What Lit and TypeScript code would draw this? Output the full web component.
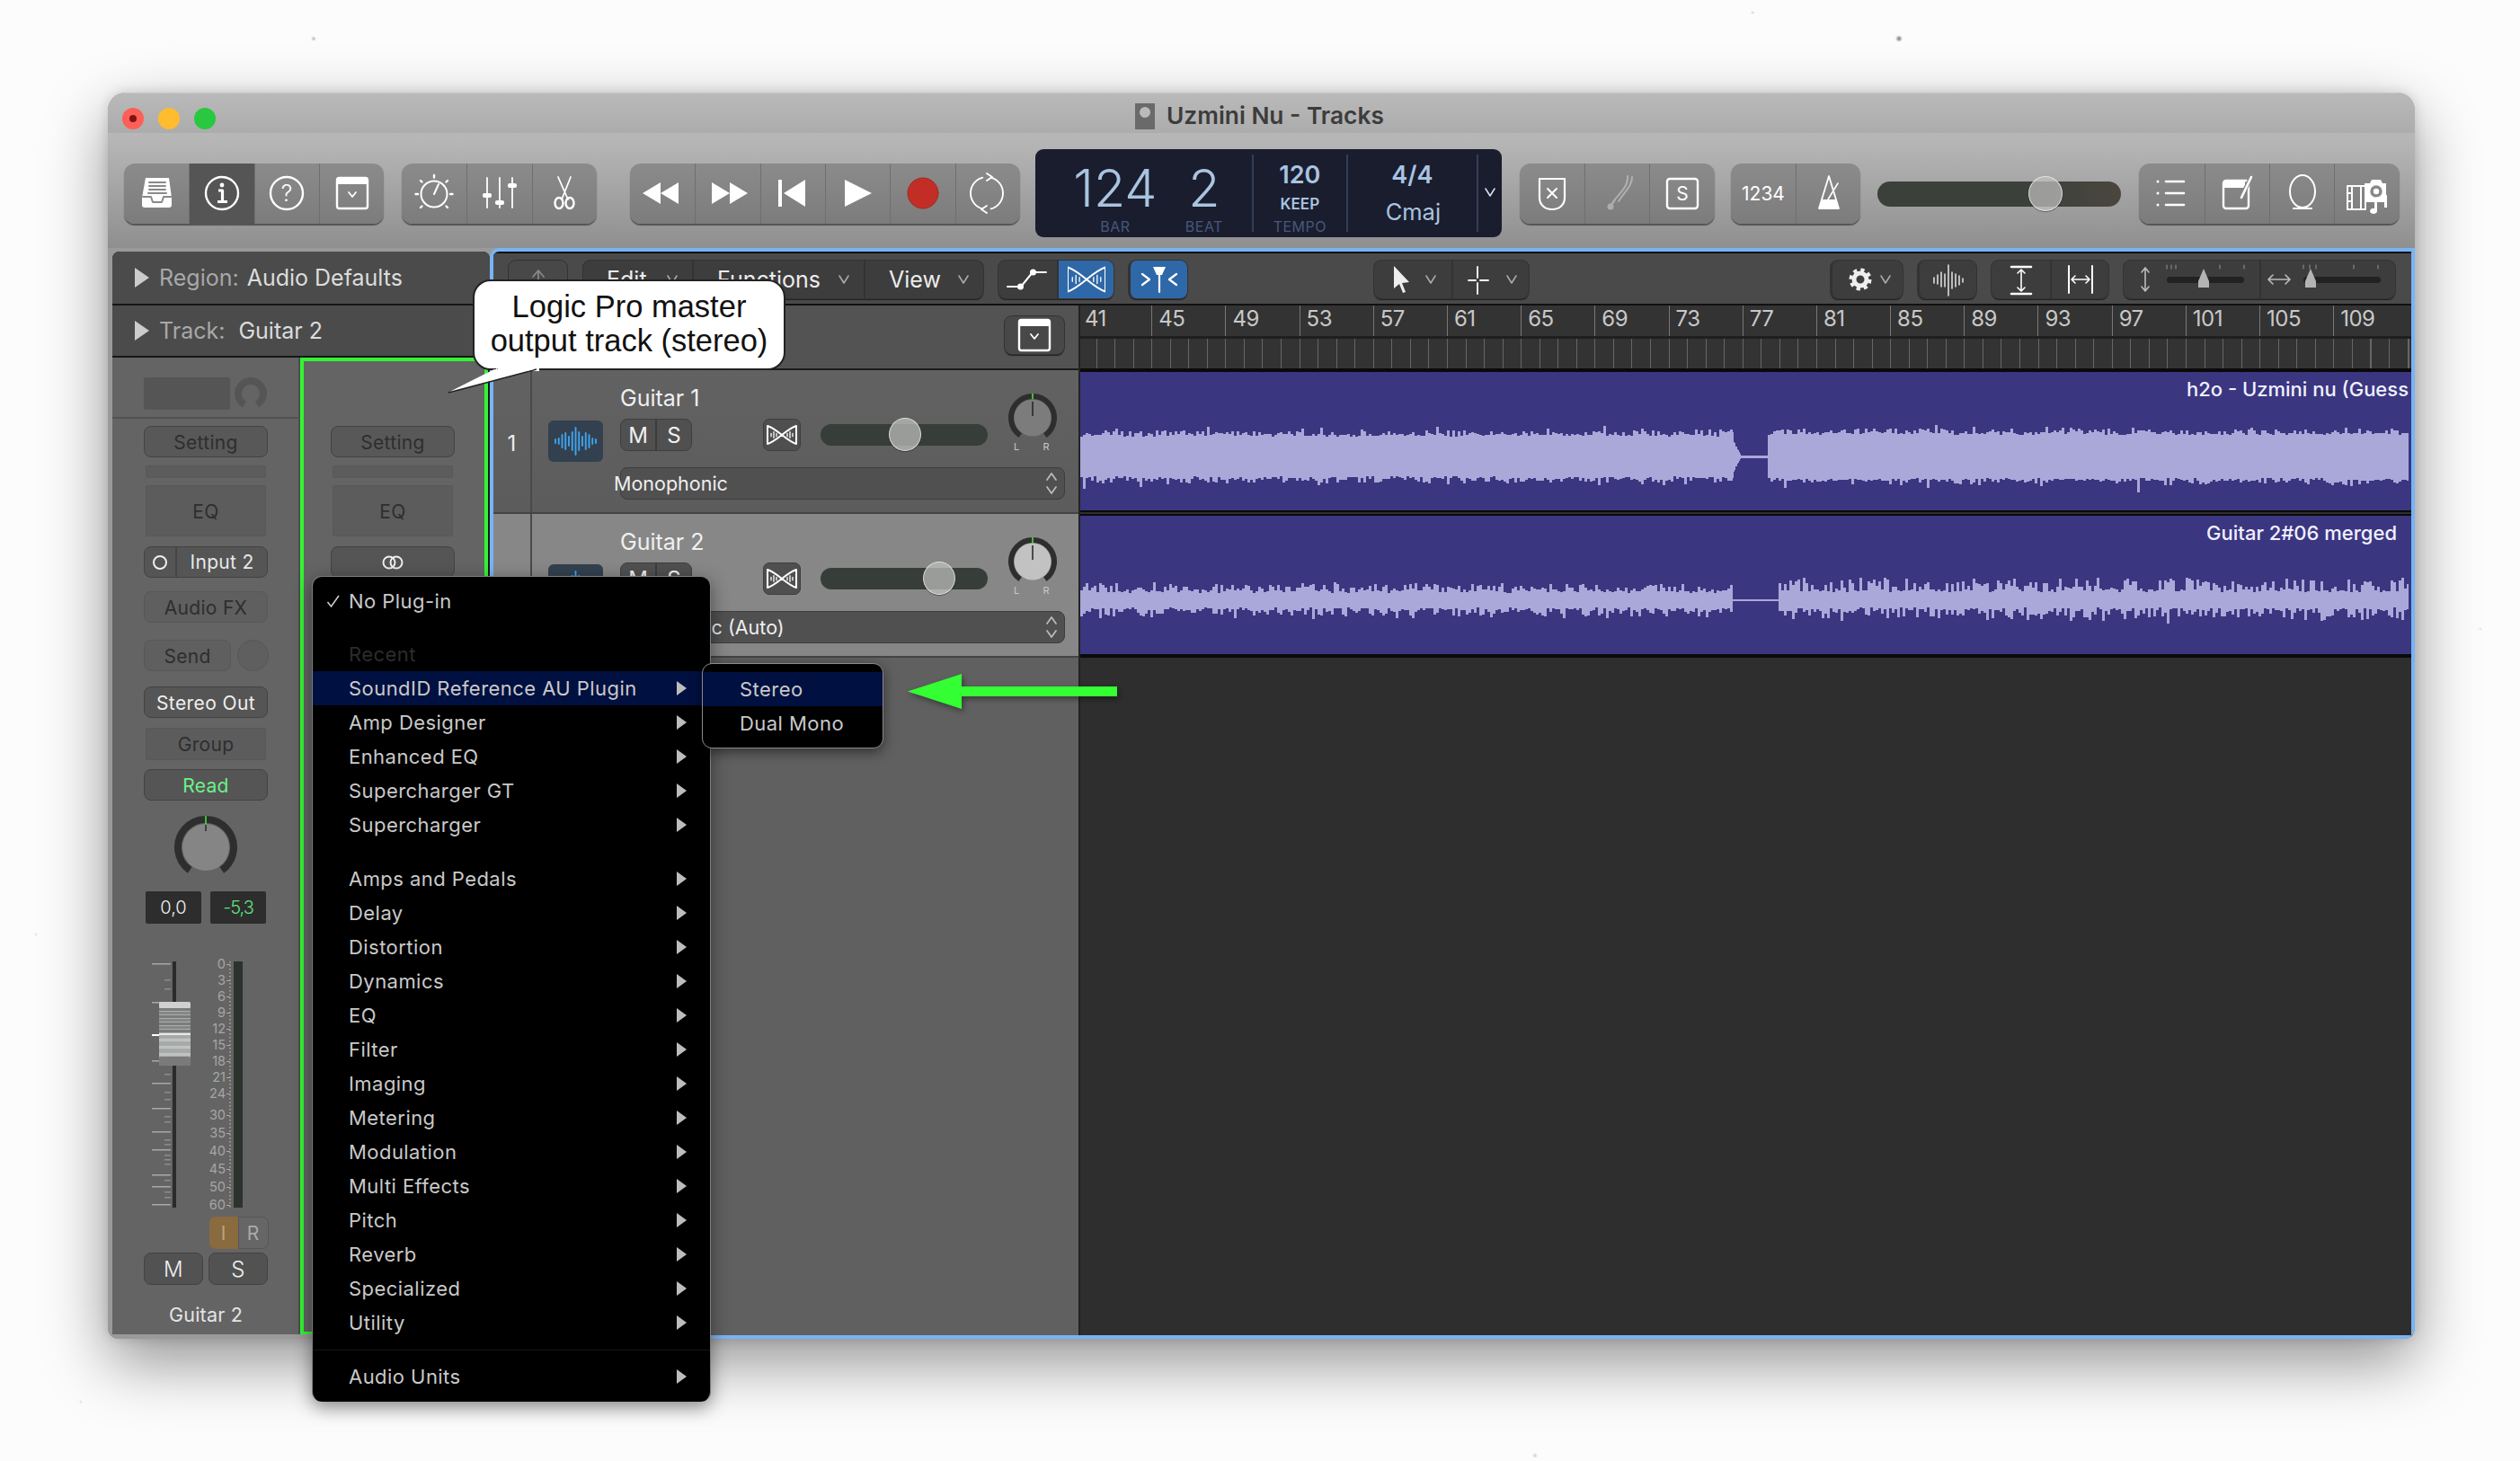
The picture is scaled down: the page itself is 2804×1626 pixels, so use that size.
import { LitElement, html, css, svg } from "lit";
import { customElement } from "lit/decorators.js";

const ic = (c: unknown, w = 72, h = 67) =>
  html`<svg class="ic" width=${w} height=${h} viewBox="0 0 ${w} ${h}" fill="none" stroke="#fff" stroke-width="2.4" stroke-linecap="round" stroke-linejoin="round">${c}</svg>`;

const pt = (cx: number, cy: number, r: number, a: number) => {
  const t = (a * Math.PI) / 180;
  return `${(cx + r * Math.sin(t)).toFixed(2)} ${(cy - r * Math.cos(t)).toFixed(2)}`;
};
const arc = (cx: number, cy: number, r: number, a0: number, a1: number) =>
  `M${pt(cx, cy, r, a0)}A${r} ${r} 0 ${Math.abs(a1 - a0) > 180 ? 1 : 0} 1 ${pt(cx, cy, r, a1)}`;

const glyph = (x: number, y: number, s: number, t: string, w = 400, fill = "#fff") =>
  svg`<text x=${x} y=${y} font-size=${s} font-weight=${w} fill=${fill} stroke="none" text-anchor="middle" font-family="Inter, 'Liberation Sans', sans-serif">${t}</text>`;

const bow = (bw: number, bh: number) => {
  const s = svg`<g stroke="#fff" stroke-width="2" fill="none" transform="translate(${21 - bw / 2} ${18 - bh / 2}) scale(${bw / 32} ${bh / 24})">
    <path vector-effect="non-scaling-stroke" d="M0 0V24M32 0V24M0 0C11 4 21 20 32 24M0 24C11 20 21 4 32 0"/>
    <path vector-effect="non-scaling-stroke" stroke-width="1.300" d="M4 10v4M7 8v8M10 10v4M22 10v4M25 8v8M28 10v4"/>
  </g>`;
  return s;
};

const ICONS = {
  library: svg`<path fill="#fff" stroke="none" d="M24 16h26l3 22v8a3 3 0 0 1-3 3H23a3 3 0 0 1-3-3v-8z"/>
    <path stroke="#8a8a8a" stroke-width="2" d="M28 21h18M28 25h18M28 29h18M27 33h20M21 37h9l2 6h10l2-6h9"/>`,
  info: svg`<circle cx="36" cy="33" r="18"/><circle cx="36" cy="24" r="2.4" fill="#fff" stroke="none"/>
    <path stroke-width="3.2" stroke-linecap="butt" d="M32 30h4.500v12M31 42.500h11"/>`,
  help: svg`<circle cx="36" cy="33" r="18"/>${glyph(36, 42, 25, "?", 300)}`,
  toolbar: svg`<rect x="19" y="16" width="34" height="34" rx="2.500"/><path fill="#fff" stroke="none" d="M19 16h34v7H19z"/>
    <path stroke-width="1.800" d="M32 32l4 5 4-5"/>`,
  smart: svg`<circle cx="36" cy="34" r="14.500" stroke-width="2"/><path stroke-width="2" d="M36 34l5-11"/>
    <path stroke-width="2.400" d="M36 13v2.500M21 19l1.500 1.500M51 19l-1.500 1.500M15.500 34h2.500M54 34h2.500M21 49l1.500-1.500M51 49l-1.500-1.500"/>`,
  mixer: svg`<path stroke-width="1.800" d="M22 16v33M36 16v33M50 16v33"/>
    <rect x="17" y="33" width="10" height="5" rx="2" fill="#fff" stroke="none"/>
    <rect x="31" y="41" width="10" height="5" rx="2" fill="#fff" stroke="none"/>
    <rect x="45" y="22" width="10" height="5" rx="2" fill="#fff" stroke="none"/>`,
  scissors: svg`<path stroke-width="1.800" d="M29 15l11 25M43 15L33 40"/>
    <ellipse cx="30" cy="44" rx="4.500" ry="6"/><ellipse cx="42" cy="44" rx="4.500" ry="6"/>`,
  rew: svg`<path fill="#fff" stroke="none" d="M14 33l20-12v24zM34 33l20-12v24z"/>`,
  ff: svg`<path fill="#fff" stroke="none" d="M58 33L38 21v24zM38 33L18 21v24z"/>`,
  start: svg`<path fill="#fff" stroke="none" d="M20 18h4v30h-4zM26 33l24-15v30z"/>`,
  play: svg`<path fill="#fff" stroke="none" d="M21 18l30 15-30 15z"/>`,
  rec: svg`<circle cx="36" cy="33" r="17" fill="#c22e25" stroke="#a12a24" stroke-width="1"/>`,
  cycle: svg`<path stroke-width="1.900" d="${arc(35, 33, 18, 15, 165)}M35 11l6 4-6 4"/><path stroke-width="1.900" d="${arc(35, 33, 18, 195, 345)}M35 55l-6-4 6-4"/>`,
  shield: svg`<path stroke-width="2.200" d="M22 17h28v21c0 8-6 13-14 13s-14-5-14-13z"/><path stroke-width="2" d="M31 28l10 10M41 28l-10 10"/>`,
  tuner: svg`<g opacity=".35"><path stroke-width="2" d="M47 14c1 10-6 16-14 26M52 15c0 10-8 16-15 27"/><circle cx="28" cy="48" r="3.500" fill="#fff" stroke="none"/><path d="M33 40l-4 6"/></g>`,
  solo: svg`<rect x="19" y="17" width="34" height="33" rx="3"/>${glyph(36, 41, 21, "S", 400)}`,
  count: svg`${glyph(36, 41, 21, "1234", 400)}`,
  metro: svg`<path stroke-width="1.800" d="M36 14L25 50h22z"/><path fill="#fff" stroke="none" d="M27.500 40h17L47 50H25z"/><path stroke-width="1.600" d="M35 40l11-18"/>`,
  list: svg`<path stroke-width="2.600" d="M30 20h20M30 33h20M30 46h20"/><path stroke-width="3" d="M21 20v.1M21 33v.1M21 46v.1"/>`,
  note: svg`<rect x="21" y="19" width="28" height="31" rx="3"/><path fill="#fff" stroke="none" d="M21 19h24v8H21z"/><path stroke="#888" stroke-width="5" d="M51 17L41 37"/><path stroke-width="2.600" d="M52 15L41 38"/>`,
  loop: svg`<ellipse cx="36" cy="31" rx="14" ry="18" stroke-width="2"/><path stroke-width="2.200" d="M26 50h20"/>`,
  media: svg`<path fill="#fff" stroke="none" d="M33 22h6l2-4h10l2 4h4v21H33z"/><circle cx="46" cy="31" r="5.500" fill="#888" stroke="#888"/><circle cx="46" cy="31" r="3.200" fill="#fff" stroke="none"/>
    <path stroke-width="2" d="M14 25h20v26H14zM19 25v26M29 25v26M14 33h5M14 42h5"/><path fill="#fff" stroke="none" d="M44 38l14-3v14h-3V39l-8 2v12a4 3 0 1 1-3-3z"/>`,
};

const chev = (c = "#aaa") =>
  html`<svg class="chev" width="14" height="12" viewBox="0 0 14 12" fill="none" stroke=${c} stroke-width="1.600" stroke-linecap="round" stroke-linejoin="round"><path d="M2 2l5 8 5-8"/></svg>`;

function rng(seed: number) {
  let s = seed;
  return () => (s = (s * 16807) % 2147483647) / 2147483647;
}
function wave1() {
  const r = rng(77);
  let d = "";
  let u = 0, b = 0;
  for (let x = 0; x < 1478; x++) {
    const fresh = x % 3 === 0;
    if (x < 727) {
      if (fresh) {
        u = 22 + r() * 3 + (r() > 0.45 ? r() * 6 : 0) + (r() > 0.92 ? r() * 6 : 0);
        b = 22 + r() * 3 + (r() > 0.45 ? r() * 6 : 0) + (r() > 0.92 ? r() * 8 : 0);
      }
    } else if (x < 736) {
      u = b = Math.max(2, 18 - (x - 727) * 2) * (0.7 + r() * 0.3);
    } else if (x < 763) {
      u = b = 1.500;
    } else if (fresh) {
      u = 24 + r() * 3 + (r() > 0.5 ? r() * 6 : 0) + (r() > 0.94 ? r() * 6 : 0);
      b = 24 + r() * 3 + (r() > 0.5 ? r() * 6 : 0) + (r() > 0.94 ? r() * 10 : 0);
    }
    d += `M${x}.5 ${(94 - u).toFixed(1)}V${(94 + b).toFixed(1)}`;
  }
  return d;
}
function wave2() {
  const r = rng(4242);
  let d = "";
  let u = 0, b = 0;
  for (let x = 0; x < 1478; x++) {
    const fresh = x % 3 === 0;
    if (x < 726) {
      if (fresh) {
        u = 8 + r() * 4 + (r() > 0.45 ? r() * 9 : 0);
        b = 8 + r() * 4 + (r() > 0.45 ? r() * 9 : 0);
      }
    } else if (x < 777) {
      u = b = 1.200;
    } else if (fresh) {
      u = 9 + r() * 4 + (r() > 0.4 ? r() * 13 : 0) + (r() > 0.93 ? r() * 12 : 0);
      b = 8 + r() * 4 + (r() > 0.4 ? r() * 12 : 0) + (r() > 0.93 ? r() * 8 : 0);
    }
    d += `M${x}.5 ${(94 - u).toFixed(1)}V${(94 + b).toFixed(1)}`;
  }
  return d;
}
const W1 = wave1();
const W2 = wave2();

const BARS = ["41","45","49","53","57","61","65","69","73","77","81","85","89","93","97","101","105","109"];
const MENU_A = ["Amp Designer", "Enhanced EQ", "Supercharger GT", "Supercharger"];
const MENU_B = ["Amps and Pedals","Delay","Distortion","Dynamics","EQ","Filter","Imaging","Metering","Modulation","Multi Effects","Pitch","Reverb","Specialized","Utility"];
const METER: [string, number][] = [["0",3],["3",21],["6",39],["9",57],["12",75],["15",93],["18",111],["21",129],["24",147],["30",171],["35",191],["40",211],["45",231],["50",251],["60",271]];
const LONG = [2, 45, 110, 135, 163, 189, 209, 237, 250, 270];
const SHORT = [20, 30, 125, 145, 153, 172, 178, 198, 203, 215, 220, 225, 243, 256, 262];

const fader = () => html`<svg class="fader" width="138" height="274" viewBox="0 0 138 274">
  ${LONG.map((y) => svg`<rect x="9" y=${y} width="21" height="1.500" fill="#a8a8a8"/>`)}
  ${SHORT.map((y) => svg`<rect x="23" y=${y} width="7" height="1.500" fill="#8c8c8c"/>`)}
  <rect x="32" y="0" width="4" height="274" fill="#2b2b2b"/>
  <rect x="9" y="81" width="8" height="2" fill="#fff"/>
  <rect x="17" y="45" width="35" height="71" rx="2" fill="#a9adac"/>
  <rect x="17" y="45" width="35" height="7" rx="2" fill="#cfd1d0"/>
  ${[52,56,60,64,68,72,76].map((y, i) => svg`<rect x="17" y=${y} width="35" height="3" fill=${i % 2 ? "#858785" : "#7a7c7b"}/>`)}
  <rect x="17" y="80" width="35" height="2" fill="#e8e8e8"/>
  ${[82,86,90,94,98,102].map((y, i) => svg`<rect x="17" y=${y} width="35" height="3" fill=${i % 2 ? "#bfc2c1" : "#a6a9a8"}/>`)}
  <rect x="17" y="106" width="35" height="10" rx="2" fill="#7a7a7a"/>
  <rect x="100" y="0" width="10" height="274" fill="#2c322c"/>
  <path d="M96 0V274" stroke="#aaa" stroke-width="1.500" stroke-dasharray="1.500 2.500"/>
  ${METER.map(([t, y]) => svg`<text x="91" y=${y + 5} text-anchor="end" font-size="14.500" fill="#a6a6a6" font-family="Inter, sans-serif">${t}</text><rect x="92" y=${y} width="4" height="1" fill="#aaa"/>`)}
</svg>`;

const panKnob = (inner: string) => html`<svg class="pan" width="56" height="72" viewBox="0 0 56 72" fill="none">
  <path d="${arc(28, 27, 24, -145, 145)}" stroke="#2e2e2e" stroke-width="6"/>
  <circle cx="28" cy="27" r="20.500" fill=${inner}/>
  <path d="M28 9V25" stroke="#222" stroke-width="1.500"/>
  <path d="M28 0V6" stroke="#3df33d" stroke-width="1.500"/>
  <text x="10" y="63" font-size="11" fill="#c8c8c8" font-family="Inter, sans-serif" text-anchor="middle">L</text>
  <text x="43" y="63" font-size="11" fill="#c8c8c8" font-family="Inter, sans-serif" text-anchor="middle">R</text>
</svg>`;

const trackIcon = html`<div class="ticon"><svg width="61" height="46" viewBox="0 0 61 46" fill="none" stroke="#3fa4f0" stroke-width="1.900" stroke-linecap="round">
  ${[4,6,14,18,10,20,30,20,10,18,14,6,4].map((h, i) => svg`<path d="M${8 + i * 3.750} ${23 - h / 2}v${h}"/>`)}
</svg></div>`;

const updown = html`<svg class="updown" width="14" height="28" viewBox="0 0 14 28" fill="none" stroke="#bdbdbd" stroke-width="1.700" stroke-linecap="round" stroke-linejoin="round"><path d="M2 10l5-7 5 7M2 18l5 7 5-7"/></svg>`;

@customElement("app-root")
export class AppRoot extends LitElement {
  static styles = css`
    :host {
      display: block;
      position: relative;
      width: 2804px;
      height: 1626px;
      overflow: hidden;
      font-family: Inter, "Liberation Sans", sans-serif;
      background:
        radial-gradient(circle 3px at 349px 43px, #b5b5b5, transparent),
        radial-gradient(circle 4px at 2113px 43px, #777, transparent),
        radial-gradient(circle 2px at 1950px 14px, #ccc, transparent),
        radial-gradient(circle 3px at 1708px 1620px, #ccc, transparent),
        radial-gradient(circle 2px at 40px 1040px, #ddd, transparent),
        radial-gradient(circle 2px at 2760px 700px, #ddd, transparent),
        radial-gradient(circle 2px at 90px 1560px, #ddd, transparent),
        #fcfcfc;
    }
    .win {
      margin: 103px 0 0 120px;
      width: 2567px;
      height: 1387px;
      border-radius: 20px 20px 12px 12px;
      overflow: hidden;
      box-shadow: 0 26px 70px rgba(0, 0, 0, 0.42), 0 0 14px rgba(0, 0, 0, 0.14);
      background: #9a9a9a;
      display: flex;
      flex-direction: column;
      position: relative;
    }
    .title {
      height: 45px;
      flex: none;
      background: linear-gradient(#b9b9b9, #acacac);
      display: flex;
      align-items: center;
      position: relative;
      border-top: 1px solid #c8c8c8;
      box-sizing: border-box;
    }
    .lights { display: flex; gap: 16px; margin: 12px 0 0 16px; }
    .light { width: 24px; height: 24px; border-radius: 50%; display: flex; align-items: center; justify-content: center; }
    .red { background: #ff5f57; }
    .red::after { content: ""; width: 8px; height: 8px; border-radius: 50%; background: #7f1411; }
    .yel { background: #febc2e; }
    .grn { background: #28c840; }
    .tname {
      position: absolute;
      left: 1143px;
      top: 10px;
      display: flex;
      align-items: center;
      gap: 13px;
      font-size: 26.300px;
      font-weight: 600;
      color: #3c3c3c;
      line-height: 30px;
      white-space: nowrap;
    }
    .ptile {
      width: 22px; height: 29px; background: #6a6a6a; display: flex; align-items: center; justify-content: center;
    }
    .ptile i { width: 12px; height: 12px; border-radius: 50%; background: #bbb; margin-top: -8px; }
    .toolbar {
      height: 128px;
      flex: none;
      background: linear-gradient(#b7b7b7 0, #b5b5b5 12px, #8f8f8f 128px);
      display: flex;
      align-items: flex-start;
      padding: 34px 0 0 18px;
      box-sizing: border-box;
    }
    .grp {
      display: flex;
      height: 67px;
      border-radius: 12px;
      overflow: hidden;
      background: linear-gradient(#8b8b8b, #7c7c7c);
      box-shadow: 0 1.500px 1px rgba(0, 0, 0, 0.45);
      flex: none;
    }
    .btn {
      width: 72.300px;
      height: 67px;
      flex: none;
      border-left: 1px solid #6f6f6f;
      box-sizing: border-box;
      display: flex;
      align-items: center;
      justify-content: center;
    }
    .btn:first-child { border-left: 0; }
    .btn.on { background: #555; }
    .ic { display: block; flex: none; }
    .g20 { margin-left: 20px; }
    .g37 { margin-left: 37px; }
    .g18 { margin-left: 18px; }
    .lcd {
      margin: -16px 0 0 17px;
      width: 519px;
      height: 98px;
      flex: none;
      background: #1a1d2e;
      border-radius: 9px;
      display: flex;
      color: #a9c4e0;
      text-align: center;
      box-sizing: border-box;
      overflow: hidden;
    }
    .lc { display: flex; flex-direction: column; align-items: center; box-sizing: border-box; height: 98px; position: relative; flex: none; }
    .sep { width: 2px; background: #2f4058; margin: 6px 0; flex: none; }
    .pos { width: 241px; display: flex; padding-left: 39px; box-sizing: border-box; gap: 34px; flex: none; }
    .pos .lc { padding-top: 14px; }
    .bar { width: 100px; }
    .beat { width: 30px; }
    .big { font-size: 57.500px; font-weight: 300; line-height: 58px; height: 58px; white-space: nowrap; }
    .lab { font-size: 16px; line-height: 16px; height: 16px; margin-top: 6px; color: #46587a; white-space: nowrap; letter-spacing: 0.500px; }
    .tempo { width: 103px; padding-top: 16px; }
    .sig { width: 143px; padding-top: 16px; }
    .mid { font-size: 27px; line-height: 26px; height: 26px; font-weight: 600; }
    .keep { font-size: 17px; line-height: 18px; height: 18px; margin-top: 10px; font-weight: 600; }
    .tempo .lab { margin-top: 8px; }
    .key { font-size: 25.500px; line-height: 30px; height: 30px; margin: 13px 0 0 2px; }
    .lchev { flex: 1; display: flex; align-items: center; justify-content: center; }
    .lchev svg { margin-top: -2px; }
    .mslider {
      margin-left: 19px;
      width: 271px;
      height: 28px;
      margin-top: 20px;
      border-radius: 14px;
      background: linear-gradient(90deg, #3b403b 0, #3b403b 60%, #4a463e 100%);
      position: relative;
      flex: none;
    }
    .thumb {
      position: absolute;
      border-radius: 50%;
      background: rgba(192, 192, 192, 0.72);
      border: 1.500px solid rgba(235, 235, 235, 0.8);
      box-sizing: border-box;
      box-shadow: 0 1px 1px rgba(0, 0, 0, 0.4);
    }
    .mslider .thumb { left: 168px; top: -6px; width: 38px; height: 39px; }

    .main { flex: 1; display: flex; padding-left: 5px; min-height: 0; background: #9a9a9a; }
    .insp {
      width: 420px;
      flex: none;
      margin-top: 4px;
      display: flex;
      flex-direction: column;
      background: #161616;
      border-radius: 8px 8px 0 0;
      overflow: hidden;
      margin-bottom: 5px;
    }
    .irow {
      height: 58px;
      flex: none;
      background: #4b4b4b;
      display: flex;
      align-items: center;
      padding-left: 25px;
      font-size: 25px;
      color: #a8a8a8;
      margin-bottom: 2px;
      white-space: nowrap;
    }
    .irow.second { height: 56px; }
    .tri { width: 0; height: 0; border-left: 16px solid #ccc; border-top: 11px solid transparent; border-bottom: 11px solid transparent; margin-right: 11px; }
    .irow em { font-style: normal; color: #dcdcdc; margin-left: 9px; }
    .irow.second em { margin-left: 15px; }
    .strips { flex: 1; display: flex; min-height: 0; }
    .strip {
      width: 209px;
      flex: none;
      background: #646464;
      padding-left: 35px;
      box-sizing: border-box;
      border-right: 2px solid #4d4d4d;
      display: flex;
      flex-direction: column;
      align-items: flex-start;
    }
    .strip.sel {
      width: 209px;
      border: 4px solid #33f533;
      border-bottom-width: 3px;
      padding-left: 30px;
    }
    .head {
      height: 68px;
      width: 209px;
      margin-left: -35px;
      padding: 22px 0 0 35px;
      box-sizing: border-box;
      border-bottom: 2px solid #525252;
      display: flex;
      gap: 4px;
      flex: none;
    }
    .sel .head { border-color: transparent; height: 64px; }
    .dbox { width: 96px; height: 36px; background: #555; border-radius: 2px; }
    .b {
      width: 138px;
      height: 35px;
      flex: none;
      box-sizing: border-box;
      border: 1px solid #434343;
      border-radius: 8px;
      background: #585858;
      font-size: 21px;
      color: #2e2e2e;
      display: flex;
      align-items: center;
      justify-content: center;
      letter-spacing: 0.300px;
      padding-top: 1px;
    }
    .flat { width: 134px; margin-left: 2px; border-radius: 2px; border-color: #585858; background: #5c5c5c; }
    .dim { background: #5f5f5f; border-color: #585858; }
    .lit { color: #efefef; background: #555; }
    .setting { margin-top: 8px; }
    .slot { height: 14px; margin-top: 9px; }
    .eq { height: 57px; margin-top: 8px; }
    .input { margin-top: 11px; padding: 0; justify-content: flex-start; color: #e8e8e8; background: #555; overflow: hidden; }
    .in0 { width: 34px; height: 100%; border-right: 2px solid #454545; display: flex; align-items: center; justify-content: center; flex: none; }
    .in0 i { width: 16px; height: 16px; border: 2px solid #eee; box-sizing: border-box; border-radius: 50%; display: block; }
    .input span { flex: 1; text-align: center; display: flex; align-items: center; justify-content: center; white-space: nowrap; }
    .fx { margin-top: 15px; }
    .sendrow { display: flex; align-items: center; gap: 7px; margin-top: 19px; flex: none; }
    .send { width: 97px; }
    .dot { width: 35px; height: 35px; border: 1px solid #585858; background: #5f5f5f; box-sizing: border-box; border-radius: 50%; }
    .out { margin-top: 17px; white-space: nowrap; letter-spacing: 0.400px; }
    .group { height: 36px; margin-top: 11px; }
    .read { margin-top: 10px; color: #6cf089; background: #555; }
    .knob { margin: 17px 0 0 33px; display: block; flex: none; }
    .vals { display: flex; gap: 10px; margin: 14px 0 0 2px; flex: none; }
    .val { width: 62px; height: 36px; background: #2d2d2d; color: #efefef; font-size: 20px; font-weight: 300; display: flex; align-items: center; justify-content: center; border-radius: 2px; }
    .val.g { color: #5fe27a; letter-spacing: -1px; }
    .fader { display: block; margin-top: 42px; flex: none; overflow: visible; }
    .ir { display: flex; width: 66px; height: 36px; margin: 10px 0 0 72.500px; box-sizing: border-box; font-size: 21px; flex: none; }
    .ir span { flex: 1; display: flex; align-items: center; justify-content: center; }
    .ir .i { background: #8a6a3f; color: #c0a27a; border-radius: 7px 0 0 7px; }
    .ir .r { background: #666; color: #aaa; border: 1px solid #565656; border-radius: 0 7px 7px 0; }
    .ms { display: flex; gap: 6px; margin-top: 4px; flex: none; }
    .ms .b { width: 66px; height: 36px; color: #f0f0f0; font-size: 24px; background: #525252; font-weight: 300; }
    .sname { width: 138px; text-align: center; font-size: 21.500px; color: #e4e4e4; margin-top: 20px; line-height: 26px; letter-spacing: 0.200px; }

    .panel {
      flex: none;
      width: 2142px;
      border: 4px solid #78b4f5;
      border-radius: 10px 0 0 0;
      box-sizing: border-box;
      background: #111;
      display: flex;
      flex-direction: column;
      overflow: hidden;
    }
    .ttb {
      height: 56px;
      margin-top: 2px;
      flex: none;
      background: #4a4a4a;
      display: flex;
      align-items: flex-start;
      padding-top: 8px;
      box-sizing: border-box;
      position: relative;
    }
    .d {
      display: flex;
      height: 42px;
      flex: none;
      border-radius: 8px;
      background: #3d3d3d;
      box-shadow: 0 0 0 1px #333, 0 1.500px 1px #222;
      overflow: hidden;
      color: #ececec;
      font-size: 25px;
    }
    .c { display: flex; align-items: center; justify-content: center; border-left: 2px solid #333; box-sizing: border-box; flex: none; height: 42px; }
    .c:first-child { border-left: 0; }
    .c.blue { background: #2f68a8; }
    .m { justify-content: space-between; padding: 0 15px 0 26px; }
    .up { width: 65px; margin-left: 17px; background: #484848; }
    .menus { margin-left: 18px; }
    .m1 { width: 121px; }
    .m2 { width: 191px; }
    .m3 { width: 133px; }
    .w1 { width: 65px; }
    .w2 { width: 63px; }
    .auto { margin-left: 17px; }
    .flex { margin-left: 17px; width: 65px; background: #2f68a8; }
    .tools { margin-left: 208px; }
    .t1 { width: 86px; padding-left: 11px; justify-content: flex-start; }
    .t1 .chev { margin-left: 15px; }
    .t2 { width: 86px; padding-left: 12px; justify-content: flex-start; }
    .t2 .chev { margin-left: 16px; }
    .gear { margin-left: 336px; width: 80px; justify-content: flex-start; padding-left: 15px; }
    .gear .chev { margin-left: 5px; }
    .wf { margin-left: 17px; width: 65px; }
    .fit { margin-left: 17px; }
    .zoom { margin-left: 17px; }
    .z { width: 151px; }

    .body { flex: 1; display: flex; min-height: 0; margin-top: 2px; }
    .tl { width: 651px; flex: none; background: #606060; border-right: 2px solid #222; display: flex; flex-direction: column; }
    .thead { height: 72px; flex: none; background: #535353; border-bottom: 2px solid #1c1c1c; position: relative; display: flex; justify-content: flex-end; padding: 12px 16px 0 0; box-sizing: border-box; }
    .thead .d { background: #484848; width: 66px; height: 42px; align-items: center; justify-content: center; }
    .tr { height: 160px; box-sizing: border-box; flex: none; display: flex; border-bottom: 2px solid #444; background: linear-gradient(#626262, #5c5c5c); }
    .tr.s { background: #878787; }
    .num { width: 41px; border-right: 2px solid #4a4a4a; flex: none; font-size: 24px; color: #ececec; text-align: center; box-sizing: content-box; padding-top: 66px; height: 92px; line-height: 32px; }
    .ticon { width: 61px; height: 46px; margin: 56px 0 0 18px; background: #33404f; border-radius: 6px; flex: none; }
    .tc { margin-left: 19px; padding-top: 16px; width: 495px; flex: none; }
    .tn { height: 30px; line-height: 30px; font-size: 25px; color: #f0f0f0; }
    .cr { display: flex; height: 36px; margin-top: 8px; align-items: flex-start; }
    .tms { display: flex; width: 80px; height: 36px; flex: none; border: 1px solid #3e3e3e; border-radius: 8px; background: #505050; box-sizing: border-box; color: #f0f0f0; font-size: 24px; overflow: hidden; }
    .tms span { flex: 1; display: flex; align-items: center; justify-content: center; }
    .tms span + span { border-left: 2px solid #3c3c3c; }
    .bowbtn { width: 42px; height: 36px; margin-left: 79px; border: 1px solid #3e3e3e; border-radius: 7px; background: #4f4f4f; box-sizing: border-box; flex: none; display: flex; align-items: center; justify-content: center; }
    .vol { width: 186px; height: 24px; margin: 6px 0 0 22px; border-radius: 12px; background: #373d38; position: relative; flex: none; }
    .vol .thumb { width: 36px; height: 37px; top: -7px; }
    .v1 { left: 76px; }
    .v2 { left: 114px; }
    .pan { display: block; margin: -28px 0 0 22px; flex: none; }
    .dd { height: 36px; margin-top: 18px; width: 495px; box-sizing: border-box; border: 1px solid #3e3e3e; border-radius: 8px; background: #505050; display: flex; align-items: center; justify-content: space-between; padding-right: 7px; font-size: 21.500px; color: #eee; }
    .dd span { margin-left: -8px; white-space: nowrap; }
    .tr.s .dd span { margin-left: -14px; }
    .rest { flex: 1; background: #606060; }

    .lanes { flex: 1; min-width: 0; display: flex; flex-direction: column; background: #2e2e2e; overflow: hidden; }
    .rtop { height: 34px; flex: none; background: #333; display: flex; margin-left: -3px; }
    .rc { width: 82.200px; flex: none; box-sizing: border-box; border-left: 1px solid #777; padding-left: 7px; font-size: 24px; color: #c8c8c8; line-height: 30px; letter-spacing: -0.500px; }
    .rline { height: 3px; flex: none; background: #1f1f1f; }
    .rbot { height: 33px; flex: none; background: repeating-linear-gradient(90deg, #666 0, #666 1px, #333 1px, #333 20.550px); background-position: -3px 0; }
    .blk { height: 4px; flex: none; background: #0a0a0a; }
    .blk2 { height: 6px; flex: none; background: linear-gradient(#0a0a0a 33%, #2f2f2f 33%, #2f2f2f 66%, #0a0a0a 66%); }
    .reg { height: 154px; flex: none; background: #3b3680; position: relative; }
    .rlab { position: absolute; top: 6px; right: 3px; font-size: 22px; font-weight: 500; color: #f0f0ff; line-height: 26px; white-space: nowrap; }
    .rlab.second { right: 16px; }
    .reg svg { display: block; }
    .lrest { flex: 1; background: #2e2e2e; }

    .menu {
      position: absolute;
      left: 347px;
      top: 641px;
      width: 444px;
      height: 919px;
      box-sizing: border-box;
      background: #000;
      border: 1.500px solid #7e7e7e;
      border-width: 1.500px 1.500px 0 1.500px;
      border-radius: 11px;
      padding-top: 8px;
      color: #c9c9c9;
      font-size: 22px;
      letter-spacing: 0.450px;
      box-shadow: 0 6px 20px rgba(0, 0, 0, 0.45);
    }
    .it { height: 38px; display: flex; align-items: center; padding: 0 26px 0 40px; position: relative; white-space: nowrap; }
    .it.hi { background: #001040; }
    .it.off { color: #2c2c2c; }
    .it svg { position: absolute; left: 15px; top: 12px; }
    .arrow { margin-left: auto; width: 0; height: 0; border-left: 11px solid #bdbdbd; border-top: 8.500px solid transparent; border-bottom: 8.500px solid transparent; }
    .g21 { height: 21px; }
    .g22 { height: 22px; position: relative; }
    .rule { height: 22px; display: flex; align-items: center; }
    .rule i { display: block; height: 1px; width: 100%; background: #161616; }
    .sub {
      position: absolute;
      left: 781px;
      top: 738px;
      width: 202px;
      height: 95px;
      box-sizing: border-box;
      background: #000;
      border: 1.500px solid #8a8a8a;
      border-radius: 11px;
      padding-top: 8.500px;
      color: #c9c9c9;
      font-size: 22px;
      letter-spacing: 0.450px;
      overflow: hidden;
      box-shadow: 0 4px 14px rgba(0, 0, 0, 0.5);
    }
    .sub .it { height: 38px; padding-left: 41px; }
    .callout {
      position: absolute;
      left: 526px;
      top: 311px;
      width: 348px;
      height: 101px;
      box-sizing: border-box;
      background: #fff;
      border: 2px solid #222;
      border-radius: 20px;
      font-family: "Liberation Sans", Arial, sans-serif;
      font-size: 34.500px;
      line-height: 38px;
      color: #111;
      text-align: center;
      padding-top: 9px;
      white-space: nowrap;
    }
    .tail { position: absolute; left: 490px; top: 405px; display: block; }
    .arrowg { position: absolute; left: 1005px; top: 745px; display: block; filter: drop-shadow(2px 3px 3px rgba(0, 0, 0, 0.4)); }
  `;

  row(a: string[]) {
    return a.map((t) => html`<div class="it">${t}<i class="arrow"></i></div>`);
  }

  track(n: string, name: string, sel: boolean, dd: string) {
    return html`<div class="tr ${sel ? "s" : ""}">
      <div class="num">${n}</div>
      ${trackIcon}
      <div class="tc">
        <div class="tn">${name}</div>
        <div class="cr">
          <div class="tms"><span>M</span><span>S</span></div>
          <div class="bowbtn">${ic(bow(32, 20), 42, 36)}</div>
          <div class="vol"><div class="thumb ${sel ? "v2" : "v1"}"></div></div>
          ${panKnob(sel ? "#c2c2c2" : "#7c7c7c")}
        </div>
        <div class="dd"><span>${dd}</span>${updown}</div>
      </div>
    </div>`;
  }

  render() {
    return html`
      <div class="win">
        <div class="title">
          <div class="lights"><div class="light red"></div><div class="light yel"></div><div class="light grn"></div></div>
          <div class="tname"><div class="ptile"><i></i></div>Uzmini Nu - Tracks</div>
        </div>
        <div class="toolbar">
          <div class="grp">
            <div class="btn">${ic(ICONS.library)}</div><div class="btn on">${ic(ICONS.info)}</div>
            <div class="btn">${ic(ICONS.help)}</div><div class="btn">${ic(ICONS.toolbar)}</div>
          </div>
          <div class="grp g20">
            <div class="btn">${ic(ICONS.smart)}</div><div class="btn">${ic(ICONS.mixer)}</div><div class="btn">${ic(ICONS.scissors)}</div>
          </div>
          <div class="grp g37">
            <div class="btn">${ic(ICONS.rew)}</div><div class="btn">${ic(ICONS.ff)}</div><div class="btn">${ic(ICONS.start)}</div>
            <div class="btn">${ic(ICONS.play)}</div><div class="btn">${ic(ICONS.rec)}</div><div class="btn">${ic(ICONS.cycle)}</div>
          </div>
          <div class="lcd">
            <div class="pos">
              <div class="lc bar"><div class="big">124</div><div class="lab">BAR</div></div>
              <div class="lc beat"><div class="big">2</div><div class="lab">BEAT</div></div>
            </div>
            <div class="sep"></div>
            <div class="lc tempo"><div class="mid">120</div><div class="keep">KEEP</div><div class="lab">TEMPO</div></div>
            <div class="sep"></div>
            <div class="lc sig"><div class="mid">4/4</div><div class="key">Cmaj</div></div>
            <div class="sep"></div>
            <div class="lchev">${chev("#cfe0f2")}</div>
          </div>
          <div class="grp g20">
            <div class="btn">${ic(ICONS.shield)}</div><div class="btn">${ic(ICONS.tuner)}</div><div class="btn">${ic(ICONS.solo)}</div>
          </div>
          <div class="grp g18">
            <div class="btn">${ic(ICONS.count)}</div><div class="btn">${ic(ICONS.metro)}</div>
          </div>
          <div class="mslider"><div class="thumb"></div></div>
          <div class="grp g20">
            <div class="btn">${ic(ICONS.list)}</div><div class="btn">${ic(ICONS.note)}</div>
            <div class="btn">${ic(ICONS.loop)}</div><div class="btn">${ic(ICONS.media)}</div>
          </div>
        </div>
        <div class="main">
          <div class="insp">
            <div class="irow"><i class="tri"></i>Region: <em>Audio Defaults</em></div>
            <div class="irow second"><i class="tri"></i>Track: <em>Guitar 2</em></div>
            <div class="strips">
              <div class="strip">
                <div class="head"><div class="dbox"></div>
                  <svg width="38" height="38" viewBox="0 0 38 38" fill="none"><path d="${arc(19, 18, 14, -150, 150)}" stroke="#555" stroke-width="8"/></svg>
                </div>
                <div class="b setting">Setting</div>
                <div class="b flat slot"></div>
                <div class="b flat eq">EQ</div>
                <div class="b input"><div class="in0"><i></i></div><span>Input 2</span></div>
                <div class="b dim fx">Audio FX</div>
                <div class="sendrow"><div class="b dim send">Send</div><div class="dot"></div></div>
                <div class="b lit out">Stereo Out</div>
                <div class="b flat group">Group</div>
                <div class="b read">Read</div>
                <svg class="knob" width="72" height="70" viewBox="0 0 72 70" fill="none">
                  <path d="${arc(36, 35, 31, -145, 145)}" stroke="#2e2e2e" stroke-width="8"/>
                  <circle cx="36" cy="35" r="26" fill="#858585"/>
                  <path d="M36 10V17" stroke="#2a2a2a" stroke-width="1.500"/>
                  <path d="M36 0V9" stroke="#3df33d" stroke-width="1.500"/>
                </svg>
                <div class="vals"><div class="val">0,0</div><div class="val g">-5,3</div></div>
                ${fader()}
                <div class="ir"><span class="i">I</span><span class="r">R</span></div>
                <div class="ms"><div class="b">M</div><div class="b">S</div></div>
                <div class="sname">Guitar 2</div>
              </div>
              <div class="strip sel">
                <div class="head"></div>
                <div class="b setting">Setting</div>
                <div class="b flat slot"></div>
                <div class="b flat eq">EQ</div>
                <div class="b input">
                  <span><svg width="26" height="16" viewBox="0 0 26 16" fill="none" stroke="#eee" stroke-width="2"><circle cx="9" cy="8" r="6.500"/><circle cx="17" cy="8" r="6.500"/></svg></span>
                </div>
              </div>
            </div>
          </div>
          <div class="panel">
            <div class="ttb">
              <div class="d up c">${ic(svg`<path stroke="#888" stroke-width="1.800" d="M22 30V12M16 18l6-7 6 7"/>`, 44, 42)}</div>
              <div class="d menus">
                <div class="c m m1">Edit${chev()}</div>
                <div class="c m m2">Functions${chev()}</div>
                <div class="c m m3">View${chev()}</div>
              </div>
              <div class="d auto">
                <div class="c w1">${ic(svg`<path stroke-width="2" d="M7 29h11M22 29L35 13M39 13h11"/><circle cx="21.500" cy="29" r="3.500" fill="#fff" stroke="none"/><circle cx="35.500" cy="13" r="3.500" fill="#fff" stroke="none"/>`, 60, 42)}</div>
                <div class="c w2 blue">${ic(svg`<g transform="translate(0 3)">${bow(42, 27)}</g>`, 42, 42)}</div>
              </div>
              <div class="d flex c">${ic(svg`
                <path stroke-width="2.200" d="M27 14V35M8 15l8 6-8 6M46 15l-8 6 8 6"/><path fill="#fff" stroke="none" d="M20 7h14l-4 9h-6z"/>`, 54, 42)}</div>
              <div class="d tools">
                <div class="c t1">${ic(svg`<path fill="#eee" stroke="none" d="M11 6l0 25 6-5 4 10 3-1-4-10 8-1z"/>`, 30, 42)}${chev()}</div>
                <div class="c t2">${ic(svg`<path stroke-width="1.800" d="M15 7v12M15 25v12M5 22h8M18 22h9"/>`, 30, 42)}${chev()}</div>
              </div>
              <div class="d gear c">
                ${ic(svg`<circle cx="16" cy="21" r="10.500" stroke-width="4" stroke="#eee" stroke-linecap="butt" stroke-dasharray="4.200 4.050"/><circle cx="16" cy="21" r="7" stroke="#eee" stroke-width="5"/>`, 32, 42)}${chev()}
              </div>
              <div class="d wf c">${ic(svg`<g stroke-width="1.600" stroke="#ddd"><path d="M11 19v6M15 16v10M19 13v16M23 15v14M27 5v34M31 13v18M35 15v14M39 17v10M43 20v4"/></g>`, 54, 42)}</div>
              <div class="d fit">
                <div class="c w1">${ic(svg`<path stroke-width="2.600" d="M10 7h22M10 37h22"/><path stroke-width="1.600" d="M21 10v24M17 14l4-4 4 4M17 30l4 4 4-4"/>`, 42, 42)}</div>
                <div class="c w1">${ic(svg`<path stroke-width="2" d="M8 6v30M34 6v30"/><path stroke-width="1.600" d="M11 21h20M15 17l-4 4 4 4M27 17l4 4-4 4"/>`, 42, 42)}</div>
              </div>
              <div class="d zoom">
                <div class="c z">${ic(svg`
                  <path stroke="#bbb" stroke-width="1.600" d="M23 8v26M19 13l4-5 4 5M19 29l4 5 4-5"/>
                  <rect x="47" y="18" width="86" height="7" rx="3.500" fill="#222" stroke="none"/>
                  <path stroke="#888" stroke-width="1.200" d="M47 5v4M52 5v4M57 5v4M106 5v4M133 5v4"/>
                  <path fill="#b4b4b4" stroke="none" d="M88 9l-6 14v7h12v-7z"/>`, 150, 42)}</div>
                <div class="c z">${ic(svg`
                  <path stroke="#bbb" stroke-width="1.600" d="M9 21h22M13 16l-5 5 5 5M27 16l5 5-5 5"/>
                  <rect x="47" y="18" width="86" height="7" rx="3.500" fill="#222" stroke="none"/>
                  <path stroke="#888" stroke-width="1.200" d="M47 5v4M54 5v4M61 5v4M103 5v4M130 5v4"/>
                  <path fill="#b4b4b4" stroke="none" d="M55 9l-6 14v7h12v-7z"/>`, 150, 42)}</div>
              </div>
            </div>
            <div class="body">
              <div class="tl">
                <div class="thead"><div class="d">${ic(ICONS.toolbar, 72, 67)}</div></div>
                ${this.track("1", "Guitar 1", false, "Monophonic")}
                ${this.track("", "Guitar 2", true, "Monophonic (Auto)")}
                <div class="rest"></div>
              </div>
              <div class="lanes">
                <div class="rtop">${BARS.map((b) => html`<div class="rc">${b}</div>`)}</div>
                <div class="rline"></div>
                <div class="rbot"></div>
                <div class="blk"></div>
                <div class="reg">
                  <div class="rlab">h2o - Uzmini nu (Guess</div>
                  <svg width="1481" height="154" viewBox="0 0 1481 154" shape-rendering="crispEdges"><path d=${W1} stroke="#aaa8d9" stroke-width="1" fill="none"/></svg>
                </div>
                <div class="blk2"></div>
                <div class="reg">
                  <div class="rlab second">Guitar 2#06 merged</div>
                  <svg width="1481" height="154" viewBox="0 0 1481 154" shape-rendering="crispEdges"><path d=${W2} stroke="#aaa8d9" stroke-width="1" fill="none"/></svg>
                </div>
                <div class="blk"></div>
                <div class="lrest"></div>
              </div>
            </div>
          </div>
        </div>
      </div>

      <div class="callout">Logic Pro master<br />output track (stereo)</div>
      <svg class="tail" width="120" height="40" viewBox="0 0 120 40" fill="none">
        <rect x="62" y="3" width="48" height="5" fill="#fff"/>
        <path d="M64 6L9 32 107 6" stroke="#222" stroke-width="1.500"/>
        <path d="M60 6L10 31 104 6z" fill="#fff"/>
      </svg>

      <div class="menu">
        <div class="it"><svg width="16" height="15" viewBox="0 0 16 15" fill="none" stroke="#ccc" stroke-width="1.600"><path d="M1.500 8l4 5L14 1"/></svg>No Plug-in</div>
        <div class="g21"></div>
        <div class="it off">Recent</div>
        <div class="it hi">SoundID Reference AU Plugin<i class="arrow"></i></div>
        ${this.row(MENU_A)}
        <div class="g22"></div>
        ${this.row(MENU_B)}
        <div class="rule"><i></i></div>
        ${this.row(["Audio Units"])}
      </div>
      <div class="sub">
        <div class="it hi">Stereo</div>
        <div class="it">Dual Mono</div>
      </div>
      <svg class="arrowg" width="250" height="52" viewBox="0 0 250 52"><path d="M5 24.500L65 5v14h173v11H65v14z" fill="#33ff33"/></svg>
    `;
  }
}
